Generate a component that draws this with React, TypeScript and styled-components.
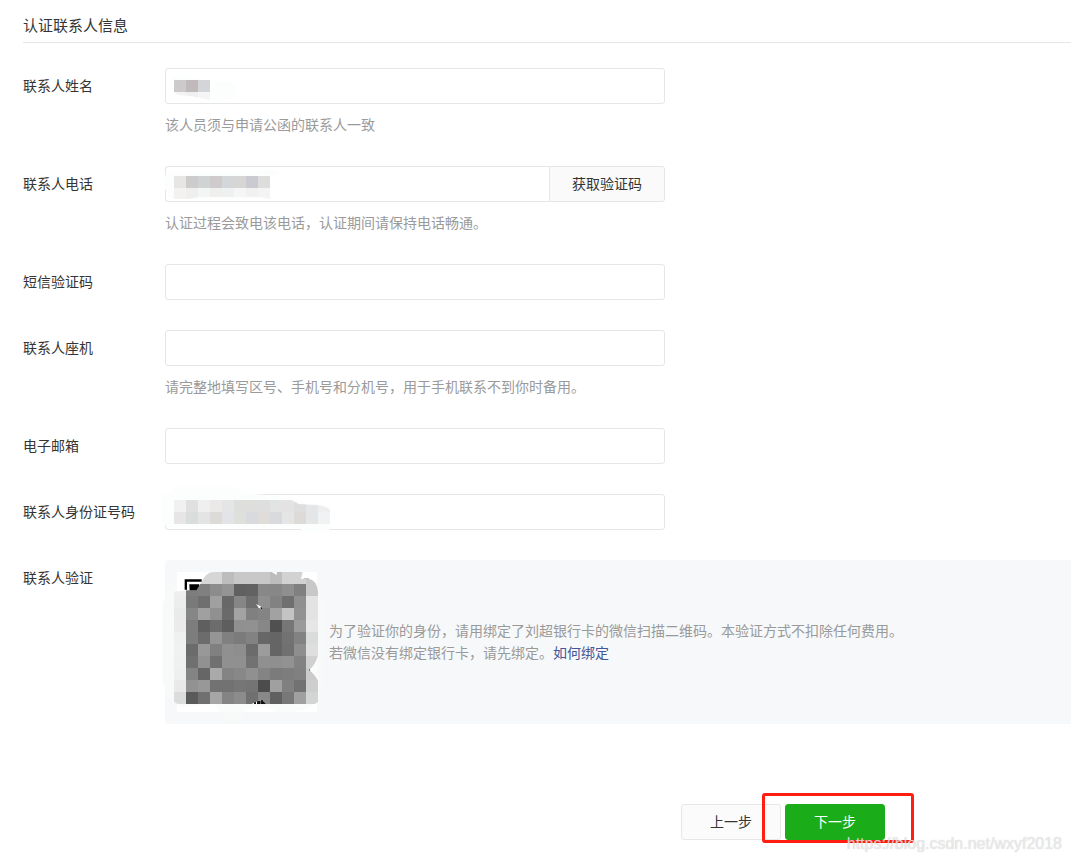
import React from "react";
import styled, { createGlobalStyle } from "styled-components";

const GlobalStyle = createGlobalStyle`
  *, *::before, *::after { box-sizing: border-box; }
  body {
    margin: 0;
    background: #fff;
    color: #353535;
    font-family: "Noto Sans CJK SC", sans-serif;
    font-size: 14px;
    line-height: 22px;
  }
  input, button { font: inherit; color: inherit; }
`;

const Page = styled.main`
  position: relative;
  padding: 14px 0 22px 23px;
  overflow: hidden;
`;

const Title = styled.h1`
  margin: 0 0 25px;
  padding-bottom: 6px;
  border-bottom: 1px solid #e7e7eb;
  font-size: 15px;
  font-weight: 400;
  line-height: 22px;
`;

const Form = styled.form`
  display: flex;
  flex-direction: column;
  gap: 30px;
`;

const Row = styled.div`
  display: flex;
  align-items: flex-start;
`;

const Label = styled.label`
  flex: 0 0 142px;
  line-height: 34px;
`;

const Caption = styled.span`
  flex: 0 0 142px;
  line-height: 34px;
`;

const Field = styled.div`
  flex: 1;
  min-width: 0;
`;

const Control = styled.div`
  position: relative;
  display: flex;
  max-width: 500px;
  height: 36px;
`;

const TextInput = styled.input<{ $joined?: boolean }>`
  flex: 1;
  min-width: 0;
  padding: 0 10px;
  border: 1px solid #e4e6e9;
  border-right-width: ${(p) => (p.$joined ? "0" : "1px")};
  border-radius: ${(p) => (p.$joined ? "3px 0 0 3px" : "3px")};
  background: #fff;
  outline: none;
`;

const CodeButton = styled.button`
  width: 116px;
  padding: 0 0 2px;
  border: 1px solid #e4e6e9;
  border-radius: 0 3px 3px 0;
  background: #fafafa;
  cursor: pointer;
`;

const Hint = styled.p`
  margin: 0;
  padding: 9px 0 1px;
  color: #9a9a9a;
`;

const Redaction = styled.svg`
  position: absolute;
  top: -4px;
  left: -4px;
  pointer-events: none;
`;

const Panel = styled.div`
  flex: 1;
  min-width: 0;
  display: flex;
  align-items: center;
  gap: 12px;
  padding: 12px;
  border-radius: 4px 0 0 4px;
  background: #f6f8f9;
`;

const QrImage = styled.svg`
  flex: none;
  display: block;
  overflow: visible;
`;

const PanelText = styled.p`
  margin: 0;
  padding-bottom: 2px;
  color: #9a9a9a;
`;

const Link = styled.a`
  color: #459;
  text-decoration: none;
`;

const Actions = styled.div`
  display: flex;
  justify-content: flex-end;
  gap: 4px;
  margin-top: 50px;
  padding-right: 186px;
`;

const StepButton = styled.button<{ $primary?: boolean }>`
  display: block;
  width: 100px;
  height: 36px;
  padding: 0 0 2px;
  border: 1px solid ${(p) => (p.$primary ? "#1aad19" : "#e7e7eb")};
  border-radius: 3px;
  background: ${(p) => (p.$primary ? "#1aad19" : "#fbfbfb")};
  color: ${(p) => (p.$primary ? "#fff" : "#353535")};
  cursor: pointer;
`;

const Highlighted = styled.div`
  position: relative;
  &::after {
    content: "";
    position: absolute;
    top: -11px;
    left: -23px;
    width: 152px;
    height: 50px;
    border: 3px solid #ff1e10;
    border-radius: 3px;
    pointer-events: none;
  }
`;

const Watermark = styled.span`
  position: absolute;
  right: 9px;
  bottom: 8px;
  color: rgba(240, 240, 240, 0.8);
  font-family: "Liberation Sans", sans-serif;
  font-size: 16px;
  line-height: 20px;
  text-shadow: 0 0 1px rgba(120, 120, 120, 0.4);
  pointer-events: none;
`;

const Cells = ({ x, y, size, rows }: { x: number; y: number; size: number; rows: string[] }) => (
  <g shapeRendering="crispEdges">
    {rows.flatMap((row, r) =>
      row.split(" ").map((c, i) => (
        <rect
          key={`${r}-${i}`}
          x={x + i * size}
          y={y + r * size}
          width={size}
          height={size}
          fill={c === "-" ? "none" : c.length === 2 ? `#${c}${c}${c}` : `#${c}`}
        />
      ))
    )}
  </g>
);

type Mask = { haze: string; clip: string; top: number; rows: string[] };

const masks: Record<string, Mask> = {
  name: {
    haze: "M8 18Q9 9 25 11Q44 17 70 18Q80 24 72 34Q60 38 44 36L18 30Q10 27 8 18Z",
    clip: "M13 16H49V36L30 32L17 31L13 28Z",
    top: 16,
    rows: ["cdcacb c1baba d4d5d9", "f3f3f4 f0f0f1 f5f5f6"],
  },
  phone: {
    haze: "M3 16Q4 9 24 11L110 8Q125 10 109 15V37H12Q3 34 3 16Z",
    clip: "M13 14H109V37L99 35H38L27 37H13Z",
    top: 14,
    rows: [
      "e7e6e5 cdcccd d0d3d4 cfcbcd d4d7d9 d8d6d5 cacbd0 dddddc",
      "f3f2f1 efefef f4f6f6 efefed eff1f0 f6f6f7 f1f1f2 f4f4f4",
    ],
  },
  idcard: {
    haze: "M0 8Q3 3 12 2V-3H70L92 4L130 7L144 13L169 15V38Q168 42 160 43L138 42L142 37H7Q0 34 0 24Z",
    clip: "M13 10H130L138 14L155 15Q166 16 169 20V34H13Z",
    top: 10,
    rows: [
      "f1f1f1 dfe0df efefef ebe9e8 e4e5e6 dededd dededd dededf e1e4e3 e4e3e1 dededf e5e6e7 eeeeee",
      "e8e5e7 d9dddb e4e4e4 dddbd8 e3e4e8 dfdfdb d9dade dfdcda d8dade e5e5e6 dddad7 e4e6e8 f1f2f4",
    ],
  },
};

const FieldMask = ({ id }: { id: string }) => {
  const m = masks[id];
  return (
    <Redaction width="180" height="44" overflow="visible" aria-hidden="true">
      <clipPath id={`clip-${id}`}>
        <path d={m.clip} />
      </clipPath>
      <path d={m.haze} fill="#fcfefd" />
      <g clipPath={`url(#clip-${id})`}>
        <Cells x={13} y={m.top} size={12} rows={m.rows} />
      </g>
    </Redaction>
  );
};

const qrRows = [
  "- - d6 d6 bd c8 c8 c8 bd d2 d2 c8",
  "ef 7d 80 8c 94 60 62 88 87 8f 80 c8",
  "eceeed 7a 6f a0 68 86 6e 8f 82 6f 90 e3",
  "e9ebea 86 a0 90 6a a3 80 84 a2 c4 92 e3",
  "ebebeb 7d 5f 6c 5e 90 91 87 50 76 9a e6",
  "eff1f1 7d 6c 95 80 7b 82 67 65 72 82 dadcdb",
  "eff2f1 6b 98 80 90 8e 6b 9c 65 70 8e de",
  "eff1f1 70 91 70 90 90 72 90 8f 92 82 d0",
  "eef0ef 84 66 aa 84 88 90 84 7b 7d 80 cb",
  "e8e9e8 92 98 72 72 76 74 4c a0 80 72 ce",
  "dadddc 5a 70 a6 84 8c 70 88 60 78 a0 d3d5d4",
];

const QrCode = () => (
  <QrImage width="140" height="140" viewBox="66 51 420 420" role="img" aria-label="二维码">
    <clipPath id="qr-outline">
      <path d="M57 110L93 106L124 106Q136 88 150 64Q160 51 180 51H350L365 60L366 51H443L438 72H463Q484 76 489 108V300Q482 330 462 345Q478 356 489 378V440L480 447H332L322 435L304 440L290 447H70Q57 445 57 435Z" />
    </clipPath>
    <path d="M66 90Q30 105 29 135Q20 140 22 160V375Q22 395 32 397Q34 430 58 440L68 455L190 455Q195 485 225 500Q262 498 270 470L400 475Q470 470 489 435Q508 400 500 340L509 210Q500 100 489 90Z" fill="#f8fafa" />
    <rect x="66" y="51" width="420" height="420" fill="#fff" />
    <path d="M66 110H57V436Q60 450 80 457L182 448L190 471H270L290 455H340L360 471H420Q460 468 486 440V110Z" fill="#fafcfb" />
    <path d="M89 73H140V80H96V104H89ZM103 88H133V107H104Z" fill="#000" />
    <path d="M297 441h6v6h-6zM306 438h10v9h-10zM317 433h7v14h-7zM324 439h9v8h-9zM459 338h6v12h-6zM446 71h16v4h-16z" fill="#111" />
    <g clipPath="url(#qr-outline)">
      <Cells x={57} y={51} size={36} rows={qrRows} />
    </g>
    <path d="M303 147L319 155L321 164L310 157Z" fill="#fff" />
    <path d="M315 158L321 157V164Z" fill="#111" />
  </QrImage>
);

type FieldRowProps = {
  id: string;
  label: string;
  hint?: string;
  type?: string;
  masked?: boolean;
  action?: string;
};

const FieldRow = ({ id, label, hint, type = "text", masked, action }: FieldRowProps) => (
  <Row>
    <Label htmlFor={id}>{label}</Label>
    <Field>
      <Control>
        <TextInput id={id} type={type} $joined={!!action} />
        {action && <CodeButton type="button">{action}</CodeButton>}
        {masked && <FieldMask id={id} />}
      </Control>
      {hint && <Hint>{hint}</Hint>}
    </Field>
  </Row>
);

export default function App() {
  return (
    <>
      <GlobalStyle />
      <Page>
        <Title>认证联系人信息</Title>
        <Form onSubmit={(e: React.FormEvent) => e.preventDefault()}>
          <FieldRow id="name" label="联系人姓名" hint="该人员须与申请公函的联系人一致" masked />
          <FieldRow
            id="phone"
            type="tel"
            label="联系人电话"
            hint="认证过程会致电该电话，认证期间请保持电话畅通。"
            action="获取验证码"
            masked
          />
          <FieldRow id="sms" label="短信验证码" />
          <FieldRow
            id="landline"
            type="tel"
            label="联系人座机"
            hint="请完整地填写区号、手机号和分机号，用于手机联系不到你时备用。"
          />
          <FieldRow id="email" type="email" label="电子邮箱" />
          <FieldRow id="idcard" label="联系人身份证号码" masked />
          <Row>
            <Caption>联系人验证</Caption>
            <Panel>
              <QrCode />
              <PanelText>
                为了验证你的身份，请用绑定了刘超银行卡的微信扫描二维码。本验证方式不扣除任何费用。
                <br />
                若微信没有绑定银行卡，请先绑定。<Link href="#bind">如何绑定</Link>
              </PanelText>
            </Panel>
          </Row>
          <Actions>
            <StepButton type="button">上一步</StepButton>
            <Highlighted>
              <StepButton type="submit" $primary>
                下一步
              </StepButton>
            </Highlighted>
          </Actions>
        </Form>
        <Watermark>https://blog.csdn.net/wxyf2018</Watermark>
      </Page>
    </>
  );
}
